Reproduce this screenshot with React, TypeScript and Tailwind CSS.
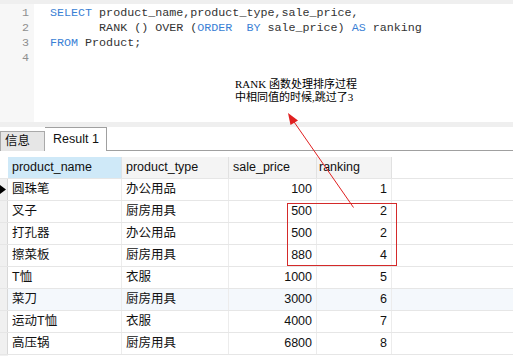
import React from "react";

const mono = { fontFamily: '"Liberation Mono", "DejaVu Sans Mono", monospace' };

const K = ({ children }: { children: React.ReactNode }) => (
  <span className="text-[#3a7fd5]">{children}</span>
);

const rows = [
  ["圆珠笔", "办公用品", "100", "1"],
  ["叉子", "厨房用具", "500", "2"],
  ["打孔器", "办公用品", "500", "2"],
  ["擦菜板", "厨房用具", "880", "4"],
  ["T恤", "衣服", "1000", "5"],
  ["菜刀", "厨房用具", "3000", "6"],
  ["运动T恤", "衣服", "4000", "7"],
  ["高压锅", "厨房用具", "6800", "8"],
];

export default function App() {
  const sans = {
    fontFamily:
      '"Liberation Sans", "Noto Sans CJK SC", Arial, sans-serif',
  };
  return (
    <div className="relative w-[513px] h-[357px] overflow-hidden bg-white">
      {/* editor */}
      <div className="h-[4px] bg-[#efefef]" />
      <div className="flex h-[118px]">
        <div
          className="w-[34px] bg-[#f7f7f7] pt-[2px] pr-[5px] text-right text-[11.7px] leading-[15px] text-[#8f8f8f]"
          style={mono}
        >
          <div>1</div>
          <div>2</div>
          <div>3</div>
          <div>4</div>
        </div>
        <div
          className="pl-[16px] pt-[2px] text-[11.7px] leading-[15px] text-[#333] whitespace-pre"
          style={mono}
        >
          <div>
            <K>SELECT</K> product_name,product_type,sale_price,
          </div>
          <div>
            {"       "}RANK () OVER (<K>ORDER</K>{"  "}<K>BY</K> sale_price) <K>AS</K> ranking
          </div>
          <div>
            <K>FROM</K> Product;
          </div>
          <div> </div>
        </div>
      </div>
      <div className="h-[5px] bg-[#efefef]" />

      {/* tabs */}
      <div className="flex items-end h-[24px] text-[12.5px] text-[#111]" style={sans}>
        <div className="h-[20px] w-[45px] bg-[#e6e6e6] border border-b-0 border-[#a9a9a9] flex items-center pl-[4px] leading-none">
          信息
        </div>
        <div className="h-[24px] w-[62px] bg-white border border-b-0 border-l-0 border-[#a0a0a0] flex items-center pl-[8px] leading-none">
          Result 1
        </div>
        <div className="flex-1 h-full border-b border-[#a0a0a0]" />
      </div>

      {/* grid */}
      <div className="pt-[6px] text-[12.5px] text-[#111]" style={sans}>
        <div className="flex h-[21px]">
          <div className="w-[8px]" />
          <div className="w-[114px] bg-[#cfe9f8] border-r border-[#dde3e8] pl-[4px] flex items-center">
            product_name
          </div>
          <div className="w-[107px] bg-[#f4f4f4] border-r border-[#e1e1e1] pl-[4px] flex items-center">
            product_type
          </div>
          <div className="w-[88px] bg-[#f4f4f4] border-r border-[#e1e1e1] pl-[4px] flex items-center">
            sale_price
          </div>
          <div className="w-[75px] bg-[#f4f4f4] border-r border-[#e1e1e1] pl-[2px] flex items-center">
            ranking
          </div>
        </div>
        {rows.map((r, i) => (
          <div
            key={i}
            className={`flex h-[22px] border-t border-[#e6e6e6] ${i === 5 ? "bg-[#f4f8fc]" : "bg-white"}`}
          >
            <div className="w-[8px] bg-[#f0f0f0] border-r border-[#d8d8d8] flex items-center">
              {i === 0 ? (
                <svg width="6" height="9" viewBox="0 0 6 9">
                  <path d="M0 0 L6 4.5 L0 9 Z" fill="#000" />
                </svg>
              ) : null}
            </div>
            <div className="w-[114px] border-r border-[#ececec] pl-[4px] flex items-center">
              {r[0]}
            </div>
            <div className="w-[107px] border-r border-[#ececec] pl-[4px] flex items-center">
              {r[1]}
            </div>
            <div className="w-[88px] border-r border-[#ececec] pr-[4px] flex items-center justify-end">
              {r[2]}
            </div>
            <div className="w-[75px] border-r border-[#ececec] pr-[4px] flex items-center justify-end">
              {r[3]}
            </div>
          </div>
        ))}
        <div className="flex h-[2px] border-t border-[#e6e6e6]">
          <div className="w-[8px] bg-[#f0f0f0]" />
        </div>
      </div>

      {/* annotation text */}
      <div
        className="absolute left-[235px] top-[78px] text-[11px] leading-[13px] text-black"
        style={{ fontFamily: '"Liberation Serif", "Noto Sans CJK SC", serif' }}
      >
        <div>RANK 函数处理排序过程</div>
        <div>中相同值的时候,跳过了3</div>
      </div>

      {/* red box */}
      <div className="absolute left-[287px] top-[203px] w-[110px] h-[63px] border border-[#d42a2a]" />

      {/* red arrow */}
      <svg
        className="absolute left-0 top-0"
        width="513"
        height="357"
        viewBox="0 0 513 357"
      >
        <line x1="353.5" y1="207.5" x2="292" y2="119" stroke="#e02020" strokeWidth="1" />
        <path d="M288 113 L298 120.5 L290.5 125 Z" fill="#e02020" />
      </svg>
    </div>
  );
}
